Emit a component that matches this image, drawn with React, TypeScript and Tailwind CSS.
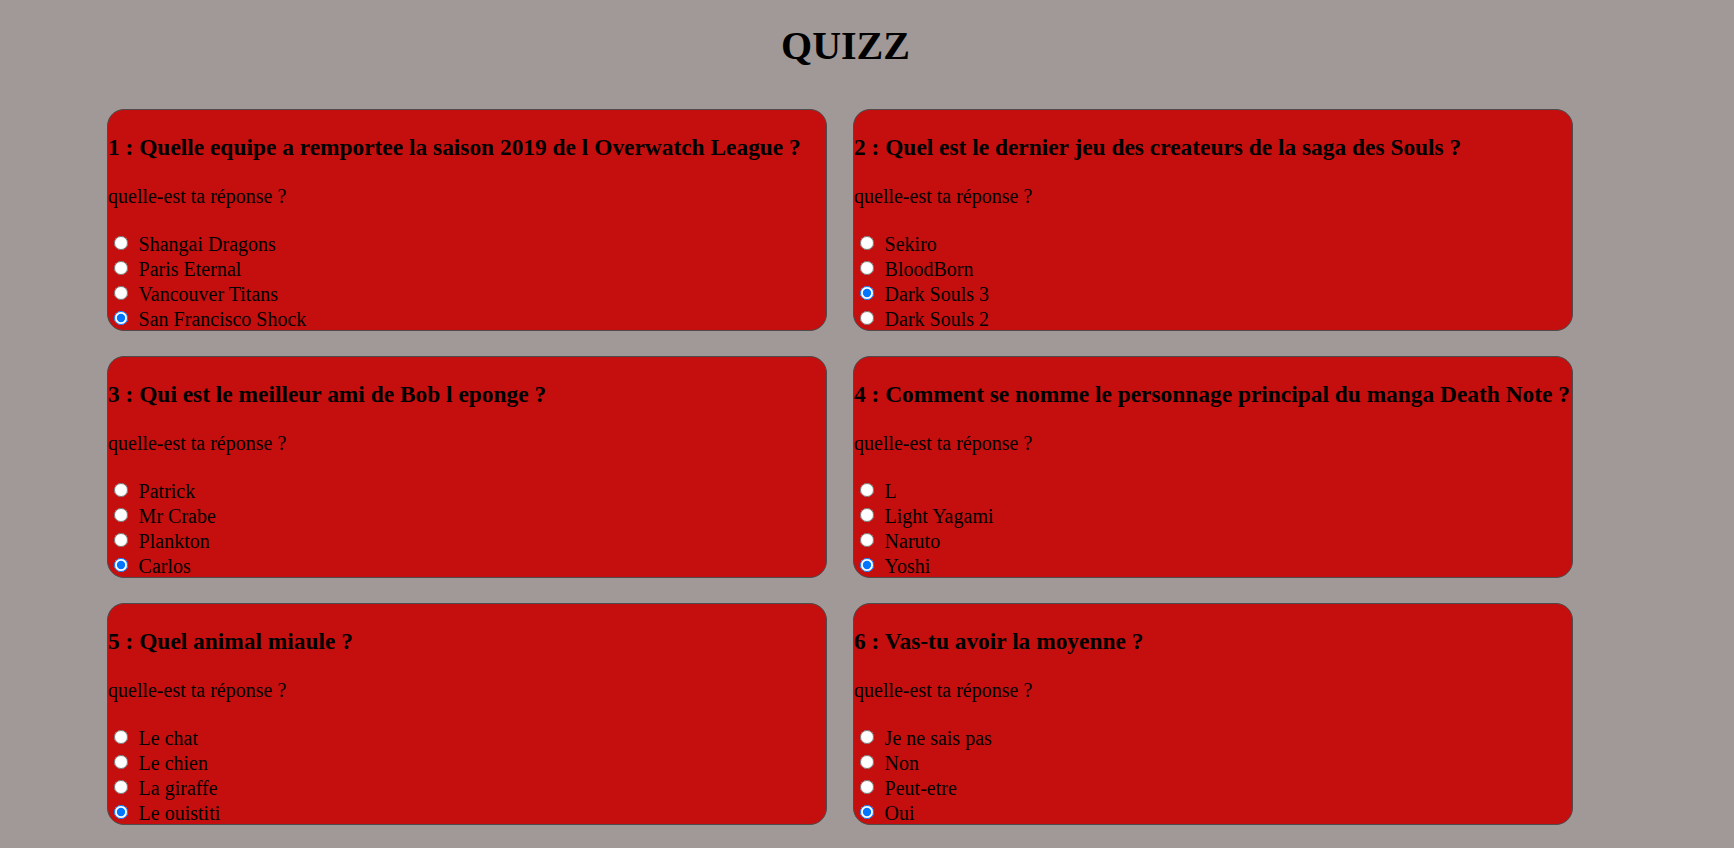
import { useState } from 'react';

interface Question {
  title: string;
  options: string[];
  answer: number;
}

const questions: Question[] = [
  {
    title: '1 : Quelle equipe a remportee la saison 2019 de l Overwatch League ?',
    options: ['Shangai Dragons', 'Paris Eternal', 'Vancouver Titans', 'San Francisco Shock'],
    answer: 3,
  },
  {
    title: '2 : Quel est le dernier jeu des createurs de la saga des Souls ?',
    options: ['Sekiro', 'BloodBorn', 'Dark Souls 3', 'Dark Souls 2'],
    answer: 2,
  },
  {
    title: '3 : Qui est le meilleur ami de Bob l eponge ?',
    options: ['Patrick', 'Mr Crabe', 'Plankton', 'Carlos'],
    answer: 3,
  },
  {
    title: '4 : Comment se nomme le personnage principal du manga Death Note ?',
    options: ['L', 'Light Yagami', 'Naruto', 'Yoshi'],
    answer: 3,
  },
  {
    title: '5 : Quel animal miaule ?',
    options: ['Le chat', 'Le chien', 'La giraffe', 'Le ouistiti'],
    answer: 3,
  },
  {
    title: '6 : Vas-tu avoir la moyenne ?',
    options: ['Je ne sais pas', 'Non', 'Peut-etre', 'Oui'],
    answer: 3,
  },
];

function QuestionCard({ q, index }: { q: Question; index: number }) {
  const [picked, setPicked] = useState(q.answer);

  return (
    <div className="h-[222px] w-[720px] rounded-[17px] border border-[#4d4b4b] bg-[#c50f0f] text-black">
      <h3 className="mt-[23.8px] whitespace-nowrap text-[23.4px] leading-[27px] font-bold">{q.title}</h3>
      <p className="mt-[24.6px] text-[20px] leading-[23px]">quelle-est ta réponse ?</p>
      <div className="mt-[23.2px]">
        {q.options.map((opt, i) => (
          <label key={opt} className="flex h-[25px] items-start text-[20px] leading-[25px]">
            <input
              type="radio"
              name={`q${index}`}
              checked={picked === i}
              onChange={() => setPicked(i)}
              className="m-0 ml-[5.5px] mt-[4.3px] h-[14.3px] w-[14.3px] shrink-0"
            />
            <span className="ml-[10.8px]">{opt}</span>
          </label>
        ))}
      </div>
    </div>
  );
}

export default function App() {
  return (
    <div className="min-h-[848px] bg-[#a09997] pl-[107px] pt-[23px] font-['Liberation_Serif','Times_New_Roman',serif]">
      <h1 className="w-[1477px] text-center text-[40px] leading-[46px] font-bold text-black">QUIZZ</h1>
      <div className="mt-[40px] grid grid-cols-[720px_721px] gap-x-[26px] gap-y-[25px] pb-[24px]">
        {questions.map((q, i) => (
          <QuestionCard key={q.title} q={q} index={i} />
        ))}
      </div>
    </div>
  );
}
